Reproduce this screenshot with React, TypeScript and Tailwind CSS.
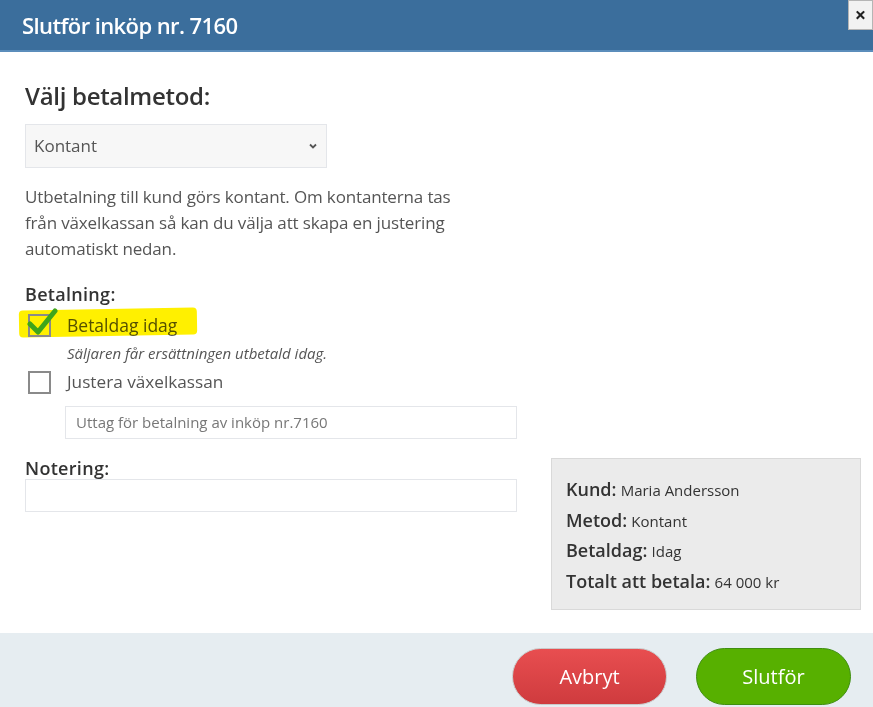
import React from "react";

const font = { fontFamily: '"Open Sans", "Noto Sans", sans-serif' };

function Check({ checked }: { checked?: boolean }) {
  return (
    <div className="relative w-[23px] h-[23px] border-2 border-[#8a8a8a] shrink-0">
      {checked && (
        <svg className="absolute -left-[4px] -top-[9px]" width="32" height="30" viewBox="0 0 32 30">
          <path d="M4 17 L12 25 L29 4" fill="none" stroke="#3fa51a" strokeWidth="5" strokeLinecap="round" strokeLinejoin="round" />
        </svg>
      )}
    </div>
  );
}

export default function App() {
  return (
    <div className="w-[873px] h-[707px] bg-white flex flex-col overflow-hidden text-[#555]" style={font}>
      <div className="relative h-[52px] shrink-0 bg-[#3b6e9c] border-b-2 border-[#5b8dbb] flex items-center px-[22px]">
        <div className="text-white text-[22px] font-semibold tracking-[-0.6px]">Slutför inköp nr. 7160</div>
        <div className="absolute right-0 top-0 w-[25px] h-[30px] bg-[#f2f2f2] border border-[#b5b5b5] flex items-center justify-center text-[#222] text-[20px] font-bold leading-none">
          ×
        </div>
      </div>
      <div className="flex-1 pl-[25px] pr-[12px] pt-[28px] relative">
        <div className="text-[24px] font-semibold text-[#333] leading-[32px] tracking-[-0.3px]">Välj betalmetod:</div>
        <div className="mt-[12px] w-[302px] h-[44px] bg-[#f7f7f7] border border-[#e4e6ea] flex items-center justify-between pl-[8px] pr-[8px]">
          <span className="text-[17px] text-[#555]">Kontant</span>
          <svg width="10" height="8" viewBox="0 0 10 8">
            <path d="M2 2.5 L5 5.5 L8 2.5" fill="none" stroke="#555" strokeWidth="1.8" />
          </svg>
        </div>
        <p className="mt-[16px] w-[455px] text-[17px] leading-[26px] text-[#555] tracking-[-0.15px]">
          Utbetalning till kund görs kontant. Om kontanterna tas från växelkassan så kan du välja att skapa en justering automatiskt nedan.
        </p>
        <div className="mt-[20px] text-[18px] font-semibold text-[#333] leading-[24px] tracking-[0.3px]">Betalning:</div>
        <div className="mt-[6px] flex items-center gap-[16px] relative pl-[3px]">
          <div className="absolute left-[-6px] top-[-3px] w-[178px] h-[27px] bg-[#fff000] rounded-[4px] -rotate-[1deg]" />
          <div className="relative"><Check checked /></div>
          <span className="relative text-[17.5px] text-[#555] mix-blend-multiply">Betaldag idag</span>
        </div>
        <div className="mt-[4px] ml-[42px] text-[15px] italic text-[#555] leading-[22px]">Säljaren får ersättningen utbetald idag.</div>
        <div className="mt-[5px] flex items-center gap-[16px] pl-[3px]">
          <Check />
          <span className="text-[17.2px] text-[#555]">Justera växelkassan</span>
        </div>
        <div className="mt-[11px] ml-[40px] w-[452px] h-[33px] border border-[#e4e6ea] flex items-center px-[10px] text-[15px] text-[#777]">
          Uttag för betalning av inköp nr.7160
        </div>
        <div className="flex justify-between mt-[19px]">
          <div>
            <div className="text-[18px] font-semibold text-[#333] leading-[20px] tracking-[0.3px]">Notering:</div>
            <div className="mt-[1px] w-[492px] h-[33px] border border-[#e4e6ea]" />
          </div>
          <div className="w-[310px] h-[152px] bg-[#ebebeb] border border-[#d9d9d9] px-[14px] pt-[18px] flex flex-col gap-[5.5px]">
            <div className="leading-[24px]"><span className="text-[18px] font-semibold text-[#333]">Kund:</span> <span className="text-[15px] text-[#333]">Maria Andersson</span></div>
            <div className="leading-[24px]"><span className="text-[18px] font-semibold text-[#333]">Metod:</span> <span className="text-[15px] text-[#333]">Kontant</span></div>
            <div className="leading-[24px]"><span className="text-[18px] font-semibold text-[#333]">Betaldag:</span> <span className="text-[15px] text-[#333]">Idag</span></div>
            <div className="leading-[24px]"><span className="text-[18px] font-semibold text-[#333]">Totalt att betala:</span> <span className="text-[15px] text-[#333]">64 000 kr</span></div>
          </div>
        </div>
      </div>
      <div className="h-[74px] shrink-0 bg-[#e6edf1] flex items-start justify-end gap-[29px] pr-[22px] pt-[15px]">
        <div className="w-[155px] h-[57px] rounded-full bg-gradient-to-b from-[#e84e50] to-[#cf3b3e] border border-[#c9c9c9] flex items-center justify-center text-white text-[20px]">
          Avbryt
        </div>
        <div className="w-[155px] h-[57px] rounded-full bg-[#57b000] border border-[#3f8f10] flex items-center justify-center text-white text-[20px]">
          Slutför
        </div>
      </div>
    </div>
  );
}
